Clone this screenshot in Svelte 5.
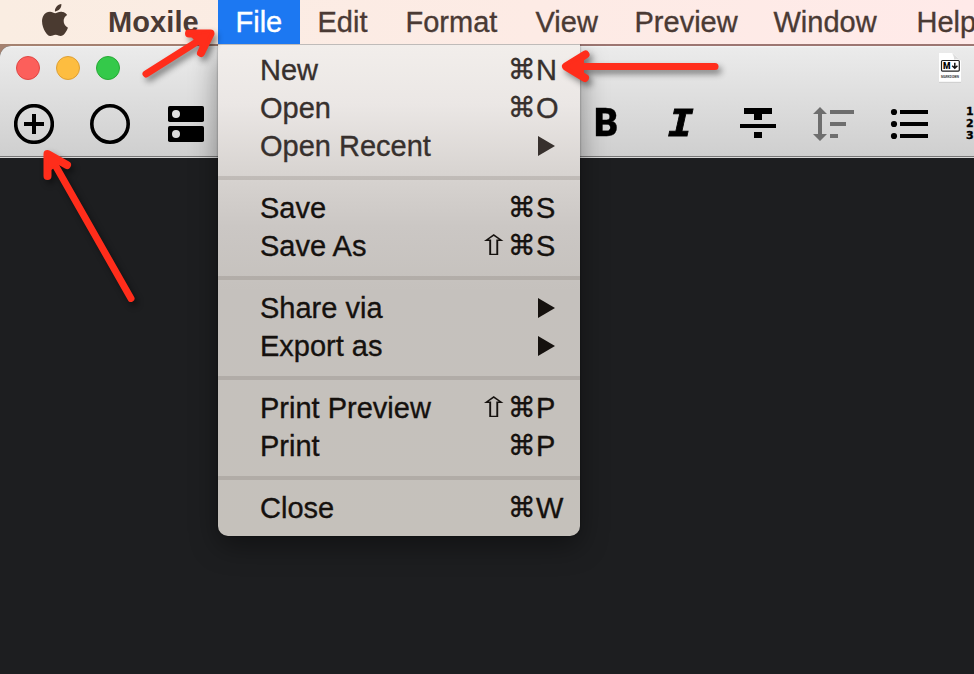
<script>
  const menus = [
    { label: 'Edit', width: 88 },
    { label: 'Format', width: 130 },
    { label: 'View', width: 99 },
    { label: 'Preview', width: 139 },
    { label: 'Window', width: 143 },
    { label: 'Help', width: 110 }
  ];
  const groups = [
    [
      { label: 'New', mods: '⌘', key: 'N' },
      { label: 'Open', mods: '⌘', key: 'O' },
      { label: 'Open Recent', sub: true }
    ],
    [
      { label: 'Save', mods: '⌘', key: 'S' },
      { label: 'Save As', mods: '⇧⌘', key: 'S' }
    ],
    [
      { label: 'Share via', sub: true },
      { label: 'Export as', sub: true }
    ],
    [
      { label: 'Print Preview', mods: '⇧⌘', key: 'P' },
      { label: 'Print', mods: '⌘', key: 'P' }
    ],
    [{ label: 'Close', mods: '⌘', key: 'W' }]
  ];
</script>

<div class="screen">
  <nav class="menubar">
    <svg class="apple" viewBox="2.2 0 19.6 24" preserveAspectRatio="none"><path d="M12.152 6.896c-.948 0-2.415-1.078-3.96-1.04-2.04.027-3.91 1.183-4.961 3.014-2.117 3.675-.546 9.103 1.519 12.09 1.013 1.454 2.208 3.09 3.792 3.039 1.52-.065 2.09-.987 3.935-.987 1.831 0 2.35.987 3.96.948 1.637-.026 2.676-1.48 3.676-2.948 1.156-1.688 1.636-3.325 1.662-3.415-.039-.013-3.182-1.221-3.22-4.857-.026-3.04 2.48-4.494 2.597-4.559-1.429-2.09-3.623-2.324-4.39-2.376-2-.156-3.675 1.09-4.61 1.09zM15.53 3.83c.843-1.012 1.4-2.427 1.245-3.83-1.207.052-2.662.805-3.532 1.818-.78.896-1.454 2.338-1.273 3.714 1.338.104 2.715-.688 3.559-1.701" /></svg>
    <span class="app">Moxile</span>
    <div class="file">
      <span>File</span>
      <div class="menu">
        {#each groups as group}
          <div class="group">
            {#each group as item}
              <div class="item">
                <span class="label">{item.label}</span>
                {#if item.sub}
                  <svg class="sub" viewBox="0 0 17 20"><path d="M0 0L17 10L0 20z" /></svg>
                {:else}
                  <span class="mods">{#each item.mods as m}<i class:shift={m === '⇧'}>{m}</i>{/each}</span>
                  <span class="key">{item.key}</span>
                {/if}
              </div>
            {/each}
          </div>
        {/each}
      </div>
    </div>
    {#each menus as m}
      <span class="entry" style="width: {m.width}px">{m.label}</span>
    {/each}
  </nav>

  <main class="window">
    <header>
      <div class="titlebar">
        <div class="lights"><b class="red"></b><b class="yellow"></b><b class="green"></b></div>
        <svg class="doc" width="24" height="32" viewBox="0 0 24 32">
          <path d="M1 1H14.500L23 8.500V30H1z" fill="#fff" />
          <path d="M1 30.300H23" stroke="#c4c4c4" stroke-width=".7" />
          <path d="M14 1Q16.500 5 16 7.500Q19.500 6.500 23 8.500z" fill="#dcdcdc" />
          <rect x="3.500" y="8.500" width="17.800" height="10.600" rx="1" fill="#fff" stroke="#222" stroke-width="1.200" />
          <text x="5" y="16.800" font-size="8.500" textLength="7.500" lengthAdjust="spacingAndGlyphs" font-weight="900" font-family="Roboto, sans-serif">M</text>
          <path d="M16.800 10.800V16M14.200 13.800L16.800 16.300L19.400 13.800" fill="none" stroke="#111" stroke-width="1.500" />
          <text x="3" y="26.200" font-size="2.800" textLength="18" lengthAdjust="spacingAndGlyphs" font-weight="700" font-family="Roboto, sans-serif" fill="#444">MARKDOWN</text>
        </svg>
      </div>
      <div class="toolbar">
        <div class="tools left">
          <svg width="40" height="40" viewBox="0 0 40 40"><circle cx="20" cy="20" r="18.300" fill="none" stroke="#000" stroke-width="3.600" /><path d="M10 20H30M20 10V30" stroke="#000" stroke-width="4" /></svg>
          <svg width="40" height="40" viewBox="0 0 40 40"><circle cx="20" cy="20" r="18.200" fill="none" stroke="#000" stroke-width="3.600" /></svg>
          <svg width="36" height="36" viewBox="0 0 36 36"><rect width="36" height="16" rx="1.800" /><rect y="20" width="36" height="16" rx="1.800" /><circle cx="8" cy="8" r="4" fill="#e0e0e0" /><circle cx="8" cy="28" r="4" fill="#dadada" /></svg>
        </div>
        <div class="tools right">
          <span class="bold">B</span>
          <span class="italic">I</span>
          <svg width="36" height="30" viewBox="0 0 36 30"><path d="M4 -1H32V5H22V11H14V5H4zM0 15H36V19H0zM14 23H22V29H14z" /></svg>
          <svg class="spacing" width="42" height="34" viewBox="0 0 42 34"><path d="M7 0L14 7H9V27H14L7 34L0 27H5V7H0zM17 3H41V7H17zM17 15H33V19H17zM17 27H25V31H17z" fill="#6e6e6e" /></svg>
          <svg class="list" width="38" height="30" viewBox="0 0 38 30"><circle cx="3" cy="3" r="3.100" /><circle cx="3" cy="15" r="3.100" /><circle cx="3" cy="27" r="3.100" /><path d="M9 1H37V5H9zM9 13H37V17H9zM9 25H37V29H9z" /></svg>
          <div class="numbers"><span>1</span><span>2</span><span>3</span></div>
        </div>
      </div>
    </header>
  </main>

  <svg class="arrows" width="974" height="674" viewBox="0 0 974 674">
    <g>
      <path d="M146 74L207 35.500" />
      <path class="head" d="M189 33.500H210.500L201 53" />
      <path class="tip" d="M212 31L191 35L204 50z" />
      <path d="M715 66.500H570" />
      <path class="head" d="M585.500 54.500L566 66.500L585 78" />
      <path class="tip" d="M564 66.500L583 56V77z" />
      <path d="M131 298.500L50 156" />
      <path class="head" d="M47.500 176V154L67 165" />
      <path class="tip" d="M47.500 153V171L63 162z" />
    </g>
  </svg>
</div>

<style>
  .screen {
    position: relative;
    width: 974px;
    height: 674px;
    overflow: hidden;
    display: flex;
    flex-direction: column;
    background: linear-gradient(90deg, #a58270, #9c7672 60%);
    font-family: 'Liberation Sans', Arial, sans-serif;
    font-size: 29px;
    letter-spacing: 0;
    -webkit-text-stroke: 0.35px currentColor;
  }
  .menubar {
    position: relative;
    z-index: 2;
    display: flex;
    flex: none;
    height: 44px;
    line-height: 45px;
    white-space: nowrap;
    color: #4a3a34;
    background: linear-gradient(90deg, #faede2, #fdebe5 55%, #ffeae9);
  }
  .apple { flex: none; width: 26px; height: 32px; margin: 4px 40px 0 42px; fill: #4a3a30; }
  .app { flex: none; width: 110px; font-weight: 700; letter-spacing: 0.1px; -webkit-text-stroke: 0; }
  .entry { flex: none; box-sizing: border-box; padding-left: 17.500px; }
  .file {
    position: relative;
    flex: none;
    width: 82px;
    box-sizing: border-box;
    padding-left: 17.500px;
    color: #fff;
    background: #1c78f2;
  }
  .menu {
    position: absolute;
    left: 0;
    top: 44px;
    width: 362px;
    height: 492px;
    box-sizing: border-box;
    padding-top: 6px;
    border-top: 1px solid #bfbbb9;
    border-radius: 0 0 10px 10px;
    color: #15110e;
    background: linear-gradient(#f2eeeb, #ebe7e5 12%, #d8d4d1 26%, #cbc7c4 37%, #c5c1bd 50%, #c5c1bb);
    box-shadow: 0 10px 28px rgba(0, 0, 0, 0.4), 0 0 2px rgba(0, 0, 0, 0.45);
    clip-path: inset(0 -50px -60px -50px);
  }
  .group + .group::before {
    content: '';
    display: block;
    height: 4px;
    margin: 11px 0 9px;
    background: rgba(90, 75, 70, 0.18);
  }
  .item { display: flex; align-items: center; height: 38px; line-height: 38px; padding: 0 16px 0 42px; }
  .group:first-child .item { color: #37302d; }
  .label { flex: 1; }
  .sub { width: 17px; height: 20px; margin-right: 9px; fill: currentColor; }
  .mods { display: flex; gap: 3px; }
  .mods i { font: normal 28px/38px 'DejaVu Sans', sans-serif; }
  .mods .shift { transform: scaleX(1.4); -webkit-text-stroke: 0; }
  .key { width: 28px; }

  .window {
    flex: 1;
    display: flex;
    flex-direction: column;
    margin-top: 2px;
    border-radius: 11px 0 0 0;
    overflow: hidden;
    background: #1d1e20;
  }
  header {
    height: 112px;
    box-sizing: border-box;
    border-bottom: 1px solid #d8d8d8;
    background: linear-gradient(#f6f6f6, #ebebeb 2px, #cfcfcf 110px, #777 110px, #777 111px);
  }
  .titlebar { display: flex; justify-content: space-between; height: 44px; padding: 0 12px 0 16px; }
  .lights { display: flex; gap: 16px; padding-top: 10px; }
  .lights b { width: 24px; height: 24px; box-sizing: border-box; border-radius: 50%; border: 1px solid; }
  .red { background: #fc5f5b; border-color: #df4744 !important; }
  .yellow { background: #fdbd40; border-color: #dd9f34 !important; }
  .green { background: #34c94a; border-color: #27a935 !important; }
  .doc { margin-top: 6px; -webkit-text-stroke: 0; }
  .toolbar { display: flex; justify-content: space-between; height: 67px; }
  .tools { display: flex; align-items: center; height: 68px; }
  .left { gap: 36px; padding-left: 14px; }
  .left svg:last-child { margin-left: 2px; }
  .right { width: 380px; flex: none; overflow: hidden; color: #000; }
  .right svg { flex: none; overflow: visible; }
  .bold {
    width: 74px;
    flex: none;
    margin-bottom: 2px;
    font: 900 39px/40px Roboto, sans-serif;
    transform: scaleX(0.96);
    transform-origin: 0 50%;
  }
  .italic {
    width: 72px;
    flex: none;
    margin-bottom: 3px;
    font: italic 700 38px/40px 'DejaVu Sans Mono', monospace;
    -webkit-text-stroke: 0.800px #000;
    transform: scaleX(1.12);
    transform-origin: 0 50%;
  }
  .spacing { margin-left: 37px; }
  .list { margin-left: 36px; }
  .numbers {
    display: flex;
    flex-direction: column;
    flex: none;
    margin-left: 37px;
    font: 700 11px/12px 'DejaVu Sans', sans-serif;
  }
  .arrows { position: absolute; inset: 0; z-index: 3; filter: drop-shadow(3px 4px 3px rgba(0, 0, 0, 0.45)); }
  .arrows path { fill: none; stroke: #ff2d1b; stroke-width: 7; stroke-linecap: round; stroke-linejoin: round; }
  .arrows .head { stroke-width: 8; }
  .arrows .tip { fill: #ff2d1b; stroke-width: 2; }
</style>
